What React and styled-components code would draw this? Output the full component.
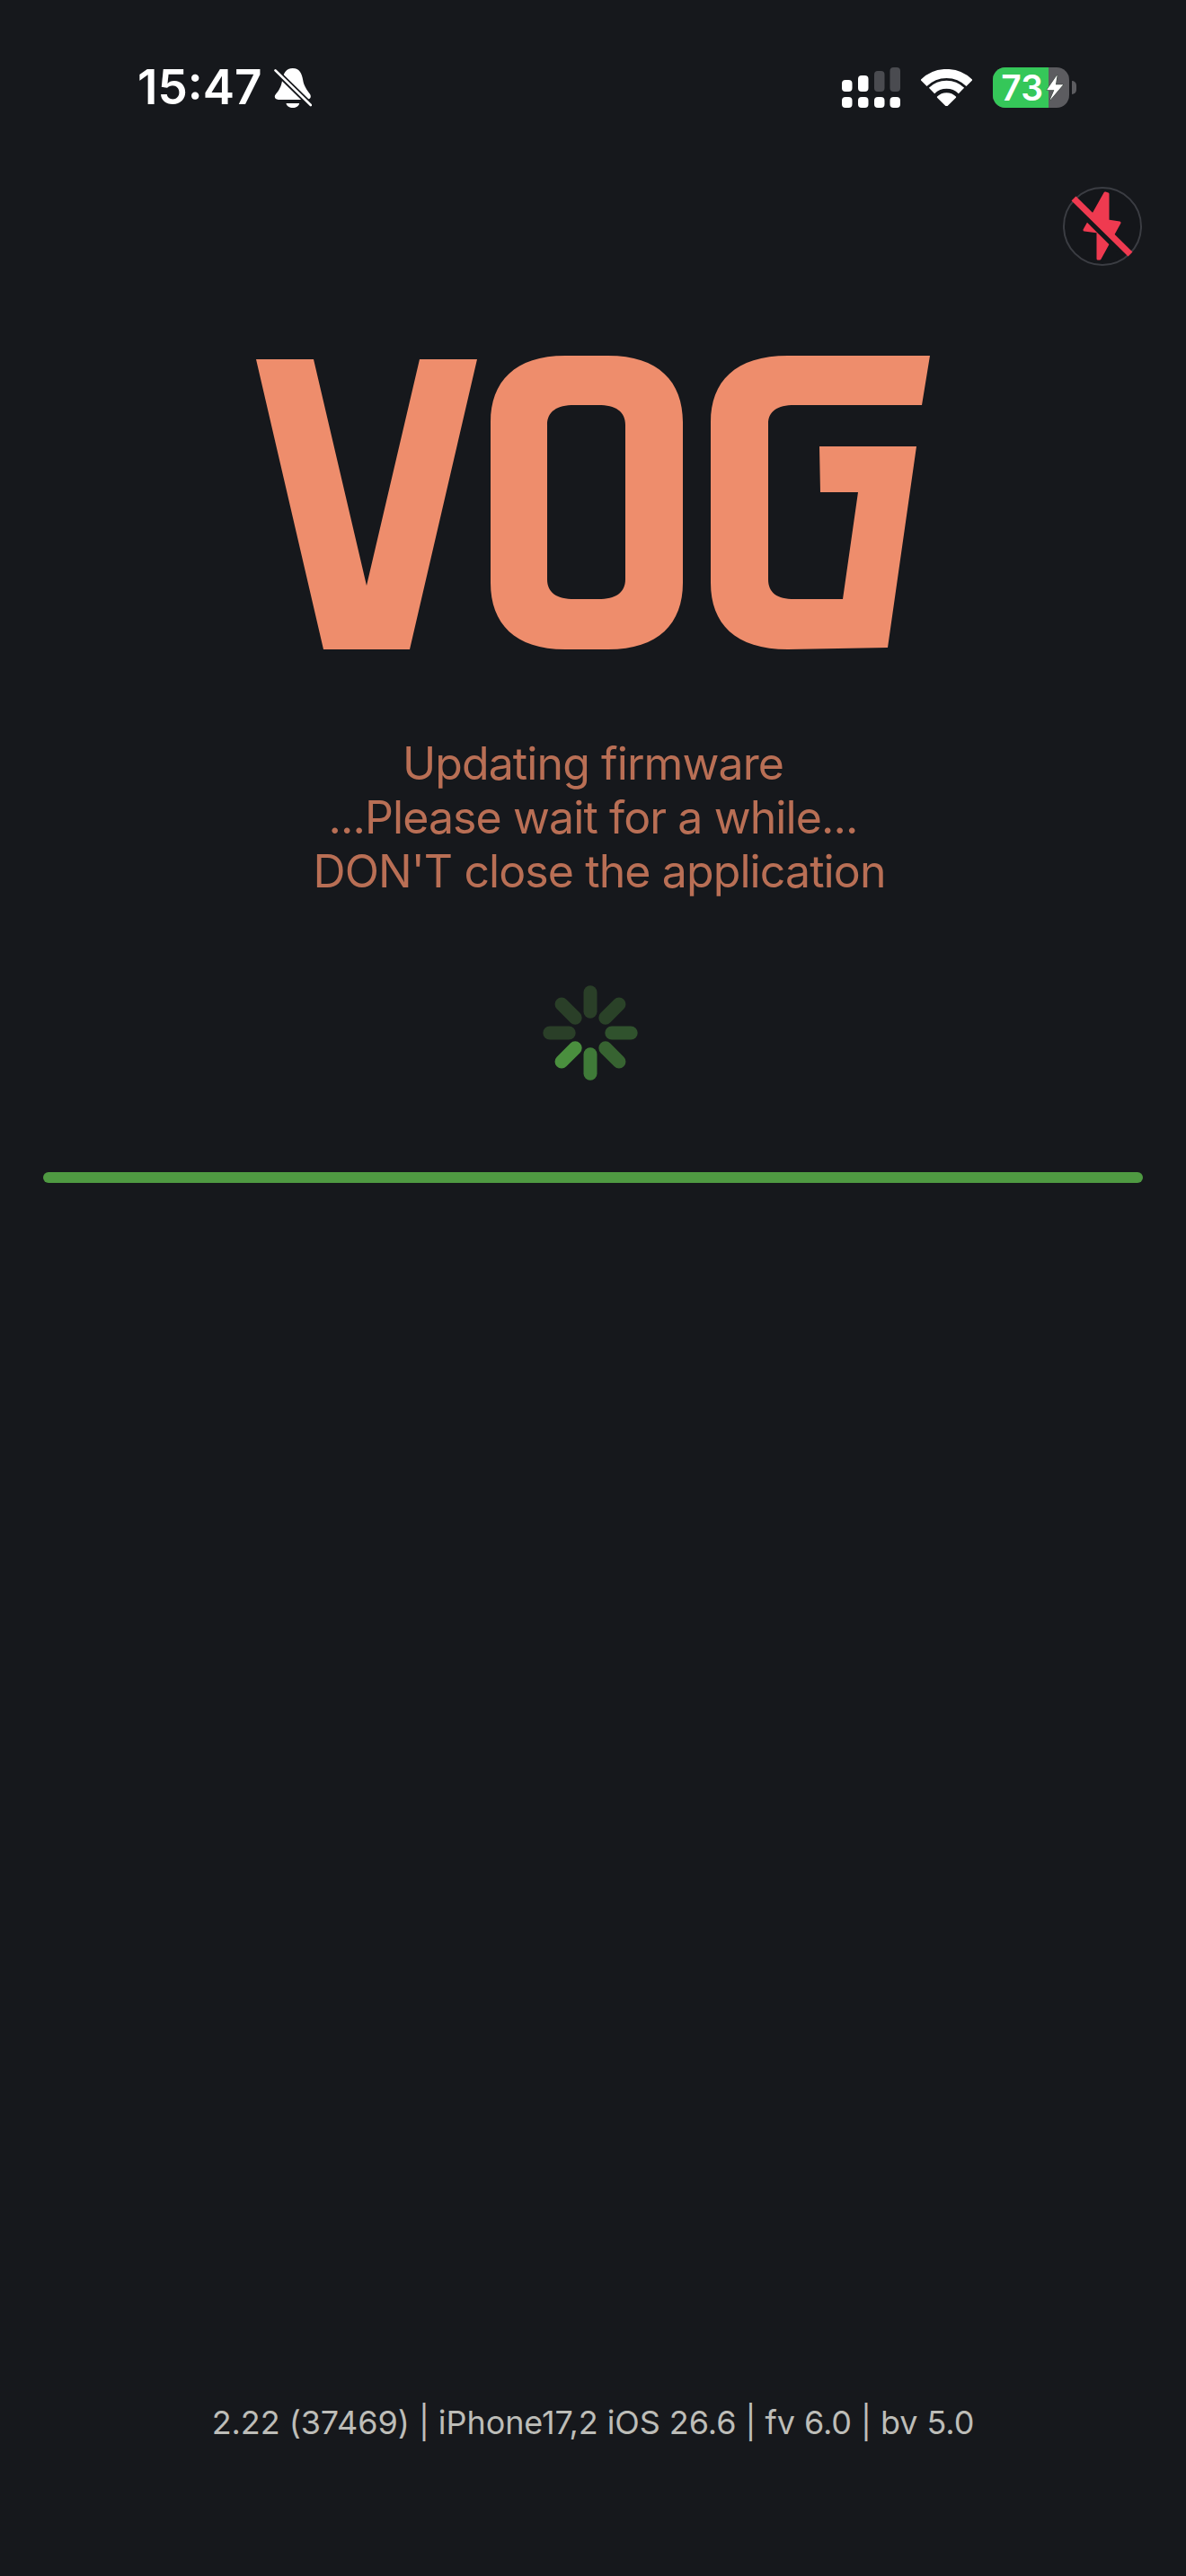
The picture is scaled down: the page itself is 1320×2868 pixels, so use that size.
import styled, { createGlobalStyle } from "styled-components";

const GlobalStyle = createGlobalStyle`
  html, body {
    margin: 0;
    padding: 0;
    background: #16181c;
  }
  * {
    box-sizing: border-box;
  }
`;

const Page = styled.div`
  display: flex;
  flex-direction: column;
  width: 1320px;
  height: 2868px;
  overflow: hidden;
  background: #16181c;
  font-family: Inter, "Liberation Sans", sans-serif;
`;

const StatusBar = styled.div`
  display: flex;
  align-items: center;
  justify-content: space-between;
  height: 46px;
  margin-top: 74px;
  padding: 0 130px 0 153px;
`;

const StatusGroup = styled.div`
  display: flex;
  align-items: center;
  gap: ${(props) => props.$gap}px;
`;

const Clock = styled.span`
  font-size: 53px;
  font-weight: 600;
  line-height: 46px;
  color: #fff;
`;

const Battery = styled.div`
  position: relative;
  display: flex;
  width: 85px;
  height: 45px;
  border-radius: 14px;
  background: #5c5c60;
  &::after {
    content: "";
    position: absolute;
    top: 15px;
    right: -8px;
    width: 5px;
    height: 15px;
    border-radius: 0 5px 5px 0;
    background: #5c5c60;
  }
`;

const BatteryFill = styled.div`
  display: flex;
  align-items: center;
  justify-content: flex-end;
  width: 62px;
  height: 100%;
  padding-right: 6px;
  border-radius: 14px 0 0 14px;
  background: #35c759;
  font-size: 39px;
  font-weight: 600;
  color: #fff;
`;

const BatteryBolt = styled.svg`
  position: absolute;
  top: 7px;
  left: 57px;
`;

const FlashRow = styled.div`
  display: flex;
  justify-content: flex-end;
  margin-top: 88px;
  padding-right: 49px;
`;

const FlashButton = styled.div`
  width: 88px;
  height: 88px;
  border: 2px solid #3b3d43;
  border-radius: 50%;
  background: #14161a;
`;

const Logo = styled.svg`
  display: block;
  flex: none;
  margin: 74px auto 0;
`;

const Message = styled.div`
  margin-top: 80px;
  text-align: center;
  font-size: 50px;
  font-weight: 400;
  line-height: 60px;
  letter-spacing: -0.9px;
  color: #b96f55;
`;

const MessageLine = styled.div`
  padding-left: ${(props) => props.$shift || 0}px;
`;

const Spinner = styled.svg`
  display: block;
  flex: none;
  margin: 90px auto 0;
  position: relative;
  left: -3px;
`;

const Progress = styled.div`
  height: 12px;
  margin: 95px 48px 0;
  border-radius: 6px;
  background: #4f9a42;
`;

const Footer = styled.div`
  margin-top: auto;
  padding-bottom: 149px;
  text-align: center;
  font-size: 36px;
  font-weight: 400;
  line-height: 44px;
  letter-spacing: -0.07px;
  color: #bdbdb8;
`;

const spokes = [
  { angle: 0, color: "#2a3f28" },
  { angle: 45, color: "#2a4228" },
  { angle: 90, color: "#30522d" },
  { angle: 135, color: "#376331" },
  { angle: 180, color: "#3f7a38" },
  { angle: 225, color: "#4a8f3e" },
  { angle: 270, color: "#2a3f28" },
  { angle: 315, color: "#2a3f28" },
];

function BellSlash() {
  return (
    <svg width="42" height="45" viewBox="0 0 125 135">
      <path
        d="M62 3C85 3 93 22 96 42C99 62 110 76 120 90C125 99 120 108 110 108H14C3 108-2 98 5 90C16 77 24 64 27 42C30 22 39 3 62 3Z"
        fill="#fff"
      />
      <path d="M40 120H84C82 130 73 135 62 135C51 135 42 130 40 120Z" fill="#fff" />
      <path d="M-4 3L130 134" stroke="#16181c" strokeWidth="19" />
      <path d="M4 10L122 126" stroke="#fff" strokeWidth="8" strokeLinecap="round" />
    </svg>
  );
}

function SignalBars() {
  return (
    <svg width="65" height="45" viewBox="0 0 65 45">
      <rect x="0" y="14" width="11.5" height="13" rx="4" fill="#fff" />
      <rect x="18" y="9" width="11.5" height="18" rx="4" fill="#fff" />
      <rect x="36" y="4" width="11.5" height="23" rx="4" fill="#4a4b50" />
      <rect x="53.5" y="0" width="11.5" height="27" rx="4" fill="#4a4b50" />
      <rect x="0" y="33" width="11.5" height="12" rx="4" fill="#fff" />
      <rect x="18" y="33" width="11.5" height="12" rx="4" fill="#fff" />
      <rect x="36" y="33" width="11.5" height="12" rx="4" fill="#fff" />
      <rect x="53.5" y="33" width="11.5" height="12" rx="4" fill="#fff" />
    </svg>
  );
}

function WifiIcon() {
  return (
    <svg width="57" height="41" viewBox="0 0 57 41" fill="none">
      <path d="M3 15.5A36 36 0 0 1 54 15.5" stroke="#fff" strokeWidth="10" strokeLinejoin="round" />
      <path d="M12 24A23.5 23.5 0 0 1 45 24" stroke="#fff" strokeWidth="9" />
      <path d="M28.5 41L18.6 31.1A14 14 0 0 1 38.4 31.1Z" fill="#fff" stroke="#fff" strokeWidth="1.5" strokeLinejoin="round" />
    </svg>
  );
}

function FlashOff() {
  return (
    <svg width="84" height="84" viewBox="0 0 84 84" fill="none">
      <path
        d="M45 5L48 6V36L61 38L39 78L37 78V48L22 46Z"
        fill="#ef3a50"
        stroke="#ef3a50"
        strokeWidth="3"
        strokeLinejoin="round"
      />
      <path d="M16 24.5L60 68.5" stroke="#14161a" strokeWidth="6" />
      <path d="M10 11L73 73" stroke="#ef3a50" strokeWidth="7" />
    </svg>
  );
}

export default function App() {
  return (
    <Page>
      <GlobalStyle />
      <StatusBar>
        <StatusGroup $gap={14}>
          <Clock>15:47</Clock>
          <BellSlash />
        </StatusGroup>
        <StatusGroup $gap={23}>
          <SignalBars />
          <WifiIcon />
          <Battery>
            <BatteryFill>73</BatteryFill>
            <BatteryBolt width="28" height="31" viewBox="0 0 28 31">
              <path
                d="M14.7 1.3L3 18.3H11.3L6.3 30L21.3 12.3H13Z"
                fill="#fff"
                stroke="#2b3a30"
                strokeWidth="1"
                paintOrder="stroke"
              />
            </BatteryBolt>
          </Battery>
        </StatusGroup>
      </StatusBar>

      <FlashRow>
        <FlashButton>
          <FlashOff />
        </FlashButton>
      </FlashRow>

      <Logo width="780" height="370" viewBox="0 0 780 370" role="img" aria-label="VOG">
        <path d="M15 30H79L138 282L197 30H261L186 353H90Z" fill="#ee8d6c" />
        <path
          fillRule="evenodd"
          d="M359 26H407C463 26 490 55 490 100V279C490 324 463 353 407 353H359C303 353 276 324 276 279V100C276 55 303 26 359 26ZM369 81C350 81 339 88 339 103V275C339 290 350 297 369 297H396C415 297 426 290 426 275V103C426 88 415 81 396 81Z"
          fill="#ee8d6c"
        />
        <path
          d="M765 26L756 81H614C595 81 585 88 585 102V275C585 290 595 297 614 297H668L685 178H643L642 127H750L718 351L607 353C548 353 521 324 521 279V100C521 55 548 26 607 26Z"
          fill="#ee8d6c"
        />
      </Logo>

      <Message>
        <MessageLine>Updating firmware</MessageLine>
        <MessageLine>...Please wait for a while...</MessageLine>
        <MessageLine $shift={14}>DON'T close the application</MessageLine>
      </Message>

      <Spinner width="120" height="120" viewBox="-60 -60 120 120">
        {spokes.map((spoke) => (
          <line
            key={spoke.angle}
            x1="0"
            y1="-23.8"
            x2="0"
            y2="-45.2"
            stroke={spoke.color}
            strokeWidth="15"
            strokeLinecap="round"
            transform={`rotate(${spoke.angle})`}
          />
        ))}
      </Spinner>

      <Progress />

      <Footer>2.22 (37469) | iPhone17,2 iOS 26.6 | fv 6.0 | bv 5.0</Footer>
    </Page>
  );
}
